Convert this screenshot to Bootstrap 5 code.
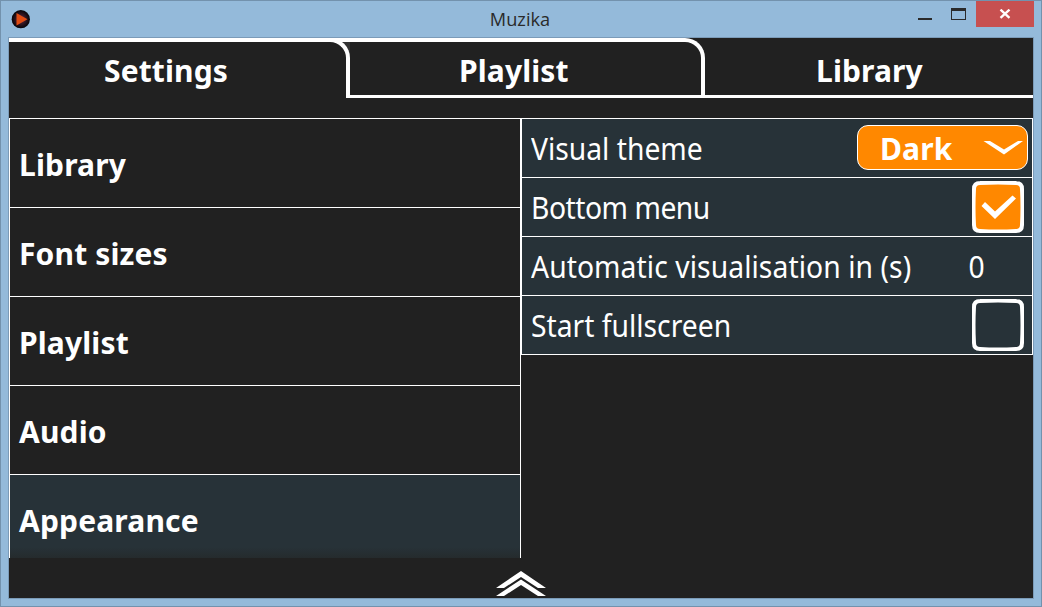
<!DOCTYPE html>
<html lang="en">
<head>
<meta charset="utf-8">
<title>Muzika</title>
<link href="https://cdn.jsdelivr.net/npm/bootstrap@5.3.0/dist/css/bootstrap.min.css" rel="stylesheet">
<style>
body{width:1042px;height:607px;overflow:hidden;font-family:"Noto Sans",sans-serif;font-size:30px;line-height:1;color:#fff}
.window{width:1042px;height:607px;background:#94bada;border:1px solid #7392ad}
.titlebar{height:36px;color:#2a2a2a}
.app-icon{margin:9px 0 0 10px}
.win-title{font:18.2px/36px "Open Sans",sans-serif;text-align:center;padding-left:92px}
.win-min{width:14px;height:2px;background:#2a2a2a;margin:17px 19px 0 0}
.win-max{width:15px;height:12px;border:1px solid #2a2a2a;border-top-width:3px;margin:7px 10px 0 0}
.win-close{width:58px;height:26px;background:#c75050;margin-right:7px}
.client{width:1026px;height:562px;margin-left:7px;border:1px solid #7b9bb8;background:#212121}
.tabs{height:60px}
.tab{height:60px;border:0 solid #fff;background:#212121;font-weight:700;letter-spacing:.12px}
.tab-label{display:block;white-space:nowrap}
.tab-first{width:341px;background:linear-gradient(#fff 4px,#333 4px)}
.tab-first .tab{border-width:4px 4px 0 0;border-top-right-radius:20px;padding:14px 0 0 95px}
.tab-mid{width:355px;border-width:4px 4px 3px 0;border-top-right-radius:20px;padding:14px 0 0 109px}
.tab-last{width:328px;border-width:0 0 3px;padding:18px 0 0 111px}
.panes{height:440px;margin-top:20px}
.categories{width:512px;height:440px;border:1px solid #fff;border-bottom:0;overflow:hidden;font-weight:700;letter-spacing:.15px}
.category{height:89px;border-bottom:1px solid #fff;padding:3px 0 0 9px}
.category.chosen{background:linear-gradient(#273238 72px,#252b2d 83px);border:0;padding-top:2px}
.options{width:512px;border:1px solid #fff;background:#273238}
.option{height:59px;border-bottom:1px solid #fff;padding:1px 8px 0 9px}
.option:last-child{height:58px;border:0}
.option-label{white-space:nowrap;margin-top:1px;transform:scaleX(.942);transform-origin:0 50%}
.option-label.tight{letter-spacing:-.5px}
.option-label.loose{letter-spacing:.08px}
.theme-btn,.theme-btn:hover{width:171px;height:45px;margin:-3px -4px 0 0;padding:2px 3px 0 22px;background:#ff8800;border:1px solid #fff;border-radius:11px;color:#fff;font-size:30px;font-weight:700;line-height:1;letter-spacing:.15px}
.theme-name{margin-top:2px}
.check{width:52px;height:52px;margin-top:-1px}
.number{width:56px;margin-top:1px}
.number span{display:inline-block;transform:scaleX(.94)}
.footer-bar{height:40px}
</style>
<script src="https://cdn.jsdelivr.net/npm/bootstrap@5.3.0/dist/js/bootstrap.bundle.min.js"></script>
</head>
<body>
<div class="window">
<header class="titlebar d-flex align-items-start">
<svg class="app-icon flex-shrink-0" width="19" height="19" viewBox="0 0 19 19"><defs><radialGradient id="disc"><stop offset=".3" stop-color="#4a2032"/><stop offset="1" stop-color="#050408"/></radialGradient></defs><circle cx="9.800" cy="9.200" r="9.100" fill="url(#disc)"/><path d="M5.500 3l11 6.200L5.500 15.500z" fill="#e04c14"/></svg>
<div class="win-title flex-grow-1">Muzika</div>
<div class="win-min"></div><div class="win-max"></div>
<div class="win-close d-flex align-items-center justify-content-center"><svg width="12" height="10" viewBox="0 0 12 10"><path d="M1.500.6l9 8.300M10.500.6l-9 8.300" stroke="#fff" stroke-width="2.3"/></svg></div>
</header>
<main class="client">
<nav class="tabs d-flex">
<div class="tab-first"><div class="tab"><span class="tab-label">Settings</span></div></div>
<div class="tab tab-mid"><span class="tab-label">Playlist</span></div>
<div class="tab tab-last"><span class="tab-label">Library</span></div>
</nav>
<div class="panes d-flex align-items-start">
<section class="categories">
<div class="category d-flex align-items-center">Library</div>
<div class="category d-flex align-items-center">Font sizes</div>
<div class="category d-flex align-items-center">Playlist</div>
<div class="category d-flex align-items-center">Audio</div>
<div class="category chosen d-flex align-items-center">Appearance</div>
</section>
<section class="options">
<div class="option d-flex align-items-center justify-content-between"><span class="option-label">Visual theme</span>
<button class="btn theme-btn d-flex align-items-center justify-content-between"><span class="theme-name">Dark</span><svg width="42" height="16" viewBox="0 0 42 16"><path d="M1.500 1h6.500l14 8.500L36 1h5L22 14.500z" fill="#fff"/></svg></button></div>
<div class="option d-flex align-items-center justify-content-between"><span class="option-label tight">Bottom menu</span>
<svg class="check" viewBox="0 0 52 52"><path d="M8 2Q26 1 44 2Q50 2 50 8Q51 26 50 44Q50 50 44 50Q26 51 8 50Q2 50 2 44Q1 26 2 8Q2 2 8 2z" fill="#ff8800" stroke="#fff" stroke-width="4"/><path d="M9.500 25l3.500-4L23 30.500 40.500 14.500l3.500 3L23 38z" fill="#fff"/></svg></div>
<div class="option d-flex align-items-center justify-content-between"><span class="option-label loose">Automatic visualisation in (s)</span><span class="number"><span>0</span></span></div>
<div class="option d-flex align-items-center justify-content-between"><span class="option-label">Start fullscreen</span>
<svg class="check" viewBox="0 0 52 52"><path d="M8 2Q26 1 44 2Q50 2 50 8Q51 26 50 44Q50 50 44 50Q26 51 8 50Q2 50 2 44Q1 26 2 8Q2 2 8 2z" fill="none" stroke="#fff" stroke-width="4"/></svg></div>
</section>
</div>
<footer class="footer-bar d-flex justify-content-center"><svg width="50" height="40" viewBox="0 0 50 40"><path d="M0 30L25 13 50 30H42L25 19 8 30zM0 38L25 21.500 50 38H42L25 27 8 38z" fill="#fff"/></svg></footer>
</main>
</div>
</body>
</html>
